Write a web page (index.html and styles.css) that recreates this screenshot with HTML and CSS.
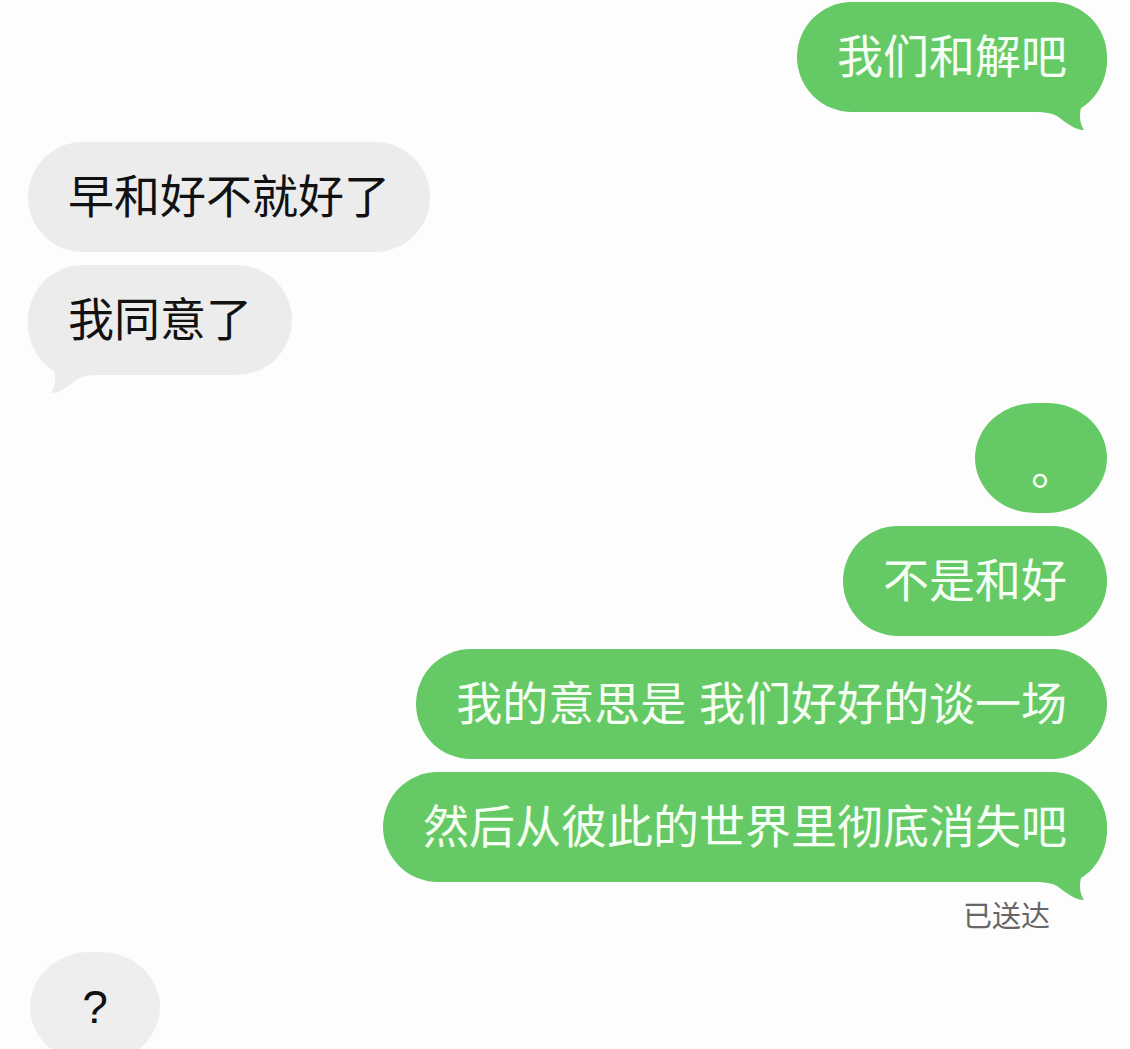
FILE: index.html
```html
<!DOCTYPE html>
<html lang="zh-CN">
<head>
  <meta charset="UTF-8">
  <title>信息</title>
  <meta name="viewport" content="width=device-width, initial-scale=1">
  <link rel="stylesheet" href="styles.css">
</head>
<body>
  <div class="chat">
    <div class="msg out first">我们和解吧
      <svg class="tail" viewBox="0 0 70 80"><path d="M62 0 L70 8 C70 30 58 48 44 56 C42 64 43 72 47 78 C38 78 28 70 20 64 C14 61 8 60 0 60 L0 30 Z"/></svg>
    </div>

    <div class="msg in group">早和好不就好了</div>
    <div class="msg in near">我同意了
      <svg class="tail" viewBox="0 0 70 80"><path d="M62 0 L70 8 C70 30 58 48 44 56 C42 64 43 72 47 78 C38 78 28 70 20 64 C14 61 8 60 0 60 L0 30 Z"/></svg>
    </div>

    <div class="msg out solo dot group-lg">。</div>
    <div class="msg out near">不是和好</div>
    <div class="msg out near">我的意思是 我们好好的谈一场</div>
    <div class="msg out near">然后从彼此的世界里彻底消失吧
      <svg class="tail" viewBox="0 0 70 80"><path d="M62 0 L70 8 C70 30 58 48 44 56 C42 64 43 72 47 78 C38 78 28 70 20 64 C14 61 8 60 0 60 L0 30 Z"/></svg>
    </div>
    <div class="status">已送达</div>

    <div class="msg in solo last">?</div>
  </div>
</body>
</html>
```

FILE: styles.css
```css
:root {
  --green: #65ca65;
  --green-fg: #f6fff3;
  --gray: #ececec;
  --gray-fg: #111111;
  --bg: #fdfdfd;
  --font: "Liberation Sans", "Noto Sans CJK SC", sans-serif;
}

body {
  margin: 0;
  background: var(--bg);
  font-family: var(--font);
  overflow: hidden;
}

.chat {
  display: flex;
  flex-direction: column;
  padding: 2px 23px 0 28px;
}

.msg {
  position: relative;
  font-size: 46px;
  line-height: 60px;
  padding: 25px 40px;
  border-radius: 55px;
  white-space: nowrap;
}

.msg.out {
  align-self: flex-end;
  background: var(--green);
  color: var(--green-fg);
}

.msg.in {
  align-self: flex-start;
  background: var(--gray);
  color: var(--gray-fg);
}

.msg.solo {
  width: 132px;
  padding: 25px 0;
  text-align: center;
  box-sizing: border-box;
  border-radius: 60px / 55px;
}

.msg.dot {
  padding: 35px 0 15px 26px;
}

.msg.in.solo {
  width: 130px;
  margin-left: 2px;
  background: #eeeeee;
}

.group { margin-top: 30px; }
.near { margin-top: 13px; }
.group-lg { margin-top: 28px; }
.last { margin-top: 15px; }

/* tail sits behind the bubble so only the hook shows */
.tail {
  position: absolute;
  z-index: -1;
  right: 0;
  bottom: -20px;
  width: 70px;
  height: 80px;
}

.out .tail { fill: var(--green); }

.in .tail {
  left: 0;
  right: auto;
  fill: var(--gray);
  transform: scaleX(-1);
}

.status {
  align-self: flex-end;
  margin: 15px 57px 0 0;
  font-size: 29px;
  line-height: 40px;
  color: #666666;
}
```
